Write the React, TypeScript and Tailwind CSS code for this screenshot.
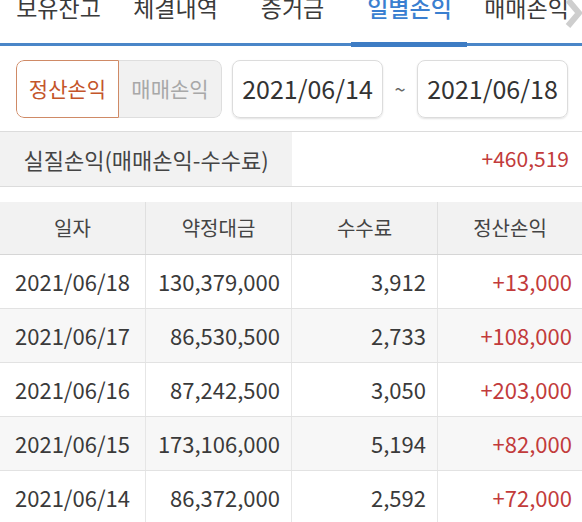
import React from "react";

const tabs = ["보유잔고", "체결내역", "증거금", "일별손익", "매매손익"];

const rows = [
  ["2021/06/18", "130,379,000", "3,912", "+13,000"],
  ["2021/06/17", "86,530,500", "2,733", "+108,000"],
  ["2021/06/16", "87,242,500", "3,050", "+203,000"],
  ["2021/06/15", "173,106,000", "5,194", "+82,000"],
  ["2021/06/14", "86,372,000", "2,592", "+72,000"],
];

export default function App() {
  return (
    <div
      className="w-[582px] h-[522px] overflow-hidden bg-white text-[#333]"
      style={{ fontFamily: '"Noto Sans CJK KR", "Noto Sans", sans-serif' }}
    >
      {/* Tabs */}
      <div className="relative h-[47px]">
        <div className="flex h-[43px]">
          {tabs.map((t, i) => (
            <div key={t} className="w-[117px] shrink-0 flex justify-center items-start">
              <span
                className={
                  "text-[23px] leading-[23px] mt-[-4px] whitespace-nowrap " +
                  (i === 3 ? "text-[#3a7fd0] font-medium" : "text-[#3a3a3a]")
                }
              >
                {t}
              </span>
            </div>
          ))}
        </div>
        <div className="h-[3px] bg-[#4a86c8]" />
        <div className="absolute left-[351px] top-[42px] w-[116px] h-[5px] bg-[#3d7cc4]" />
        <svg className="absolute right-[-2px] top-[-1px]" width="22" height="32" viewBox="0 0 22 32">
          <polyline points="6,1 17,14 6,27" fill="none" stroke="#c9c9c9" strokeOpacity="0.9" strokeWidth="6" />
        </svg>
      </div>

      {/* Controls */}
      <div className="flex items-center pl-[16px] mt-[13px] h-[58px]">
        <div className="flex w-[206px] h-[58px] rounded-[8px] overflow-hidden">
          <div className="w-[103px] flex items-center justify-center border border-[#cf8a66] rounded-l-[8px] bg-white text-[21px] text-[#c4552a]">
            정산손익
          </div>
          <div className="flex-1 flex items-center justify-center border border-l-0 border-[#dedede] rounded-r-[8px] bg-[#f1f1f1] text-[21px] text-[#a8a8a8]">
            매매손익
          </div>
        </div>
        <div className="ml-[10px] w-[151px] h-[58px] flex items-center justify-center rounded-[8px] border border-[#dcdcdc] shadow-[0_1px_2px_rgba(0,0,0,0.12)] text-[25px] text-[#333]">
          2021/06/14
        </div>
        <div className="w-[34px] text-center text-[20px] text-[#666]">~</div>
        <div className="w-[151px] h-[58px] flex items-center justify-center rounded-[8px] border border-[#dcdcdc] shadow-[0_1px_2px_rgba(0,0,0,0.12)] text-[25px] text-[#333]">
          2021/06/18
        </div>
      </div>

      {/* Summary */}
      <div className="mt-[13px] flex h-[56px] border-y border-[#dcdcdc]">
        <div className="w-[292px] bg-[#f2f2f2] flex items-center justify-center text-[22px] text-[#444]">
          실질손익(매매손익-수수료)
        </div>
        <div className="flex-1 flex items-center justify-end pr-[13px] text-[21px] text-[#c23b3b]">
          +460,519
        </div>
      </div>

      {/* Table */}
      <div className="mt-[15px]">
        <div className="grid grid-cols-[146px_146px_146px_144px] h-[53px] bg-[#f2f2f2] border-b border-[#d6d6d6] text-[20px] text-[#444]">
          {["일자", "약정대금", "수수료", "정산손익"].map((h, i) => (
            <div
              key={h}
              className={"flex items-center justify-center " + (i < 3 ? "border-r border-[#e0e0e0]" : "")}
            >
              {h}
            </div>
          ))}
        </div>
        {rows.map((r, ri) => (
          <div
            key={r[0]}
            className={
              "grid grid-cols-[146px_146px_146px_144px] h-[54px] border-b border-[#e2e2e2] text-[22px] " +
              (ri % 2 === 1 ? "bg-[#f7f7f7]" : "bg-white")
            }
          >
            <div className="flex items-center justify-center border-r border-[#e6e6e6] text-[#3a3a3a]">{r[0]}</div>
            <div className="flex items-center justify-end pr-[11px] border-r border-[#e6e6e6] text-[#3a3a3a]">{r[1]}</div>
            <div className="flex items-center justify-end pr-[11px] border-r border-[#e6e6e6] text-[#3a3a3a]">{r[2]}</div>
            <div className="flex items-center justify-end pr-[10px] text-[#c23b3b]">{r[3]}</div>
          </div>
        ))}
      </div>
    </div>
  );
}
